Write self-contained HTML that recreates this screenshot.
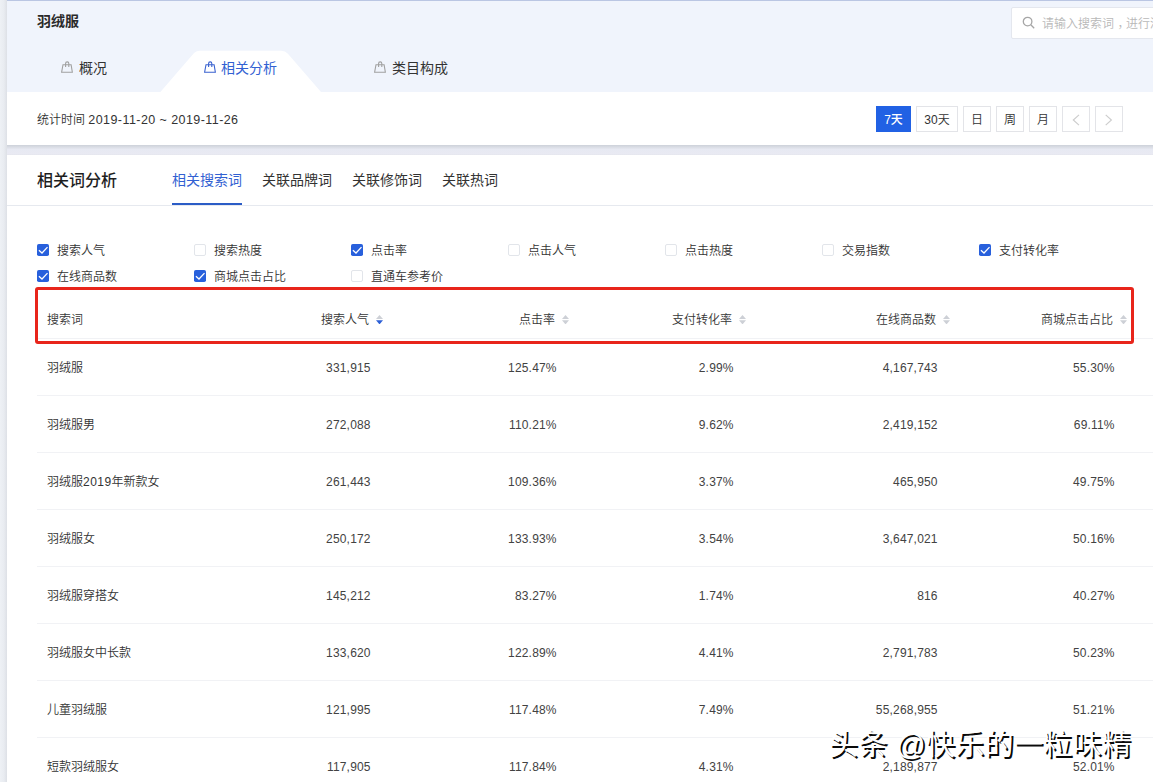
<!DOCTYPE html>
<html lang="zh-CN">
<head>
<meta charset="utf-8">
<title>羽绒服 - 相关分析</title>
<style>
*{box-sizing:border-box;margin:0;padding:0}
html,body{width:1153px;height:782px;overflow:hidden}
body{background:#e9ecf2;font-family:"Liberation Sans","Noto Sans CJK SC",sans-serif;font-size:12px;color:#333;position:relative;font-weight:350}
.a{position:absolute;white-space:nowrap}
#p1{left:7px;top:0;width:1146px;height:145px;background:#fff}
#strip{left:0;top:0;width:7px;height:782px;background:linear-gradient(to right,#eef1f5 0,#e9ecf1 55%,#dde0e6 100%)}
#gap{left:7px;top:145px;width:1146px;height:10px;background:linear-gradient(to bottom,#cdd1d9 0,#dcdfe7 25%,#e7e9f2 45%,#e9eaf3 85%,#e5e6ee 100%)}
#p1top{left:7px;top:0;width:1146px;height:92px;background:#f0f4fc;border-top:1px solid #bac6e3}
#title{left:37px;top:12px;font-size:14px;font-weight:700;color:#2a2a2a;line-height:18px}
.tab{top:58px;font-size:14px;line-height:20px;color:#333;font-weight:400}
.tab.on{color:#3261d2}
.ico{top:61px}
#search{left:1011px;top:7px;width:160px;height:32px;background:#fff;border:1px solid #e4e7ee;border-radius:2px}
#ph{left:1042px;top:16px;color:#b8b8b8;font-size:12px;line-height:16px}
#stat{left:37px;top:111px;font-size:12px;line-height:18px;color:#333}
.btn{top:106px;height:26px;border:1px solid #e3e4e8;background:#fff;font-size:12px;line-height:26px;text-align:center;color:#333}
.btn.on{background:#2161e4;border-color:#2161e4;color:#fff;font-weight:500}
#p2{left:7px;top:155px;width:1146px;height:640px;background:#fff}
#h2{left:37px;top:170px;font-size:16px;font-weight:500;color:#1e1e1e;line-height:22px}
.st{top:170px;font-size:14px;line-height:20px;color:#333;font-weight:400}
.st.on{color:#3261d2}
#hline{left:7px;top:205px;width:1146px;height:1px;background:#e6e9ef}
#uline{left:172px;top:203px;width:70px;height:2px;background:#2b5cc6}
.cb{font-size:12px;line-height:16px;color:#333}
.bx{width:12px;height:12px;border:1px solid #e2e5ea;border-radius:2px;background:#fff}
.bx.on{background:#2062e6;border-color:#2062e6}
#red{left:35px;top:287px;width:1099px;height:57px;border:3px solid #e8251b;border-radius:3px}
.th{top:312px;font-size:12px;line-height:16px;color:#363636}
.sep{left:37px;width:1116px;height:1px;background:#f1f2f5}
.td{font-size:12px;line-height:16px;color:#333}
.n{color:#424242;letter-spacing:.18px}
#wm{left:829px;top:724px;font-size:29px;line-height:42px;color:#fff;text-shadow:1.8px 1.8px 0 #0a0a0a;font-weight:400;letter-spacing:.35px}
</style>
</head>
<body>
<div id="strip" class="a"></div><div id="gap" class="a"></div><div id="p1" class="a"></div><div id="p1top" class="a"></div>
<header>
<h1 id="title" class="a">羽绒服</h1>
<nav aria-label="页面导航">
<svg class="a" style="left:150px;top:48px" width="190" height="44" viewBox="0 0 190 44"><path d="M10.4 44 L43.4 5.8 Q46 2.75 50 2.75 L131.3 2.75 Q135.3 2.75 137.9 5.8 L171 44z" fill="#fff"/></svg>
<svg class="a ico" style="left:61px;top:61px" width="12" height="12" viewBox="0 0 12 12" fill="none" stroke="#a0a0a0" stroke-width="1.1"><path d="M2 3.7H10.1L11.35 11.2H0.6Z"/><path d="M4.6 6V2.45a1.6 1.6 0 0 1 3.2 0V6"/></svg><div class="a tab" style="left:79px">概况</div>
<svg class="a ico" style="left:203.5px;top:61px" width="12" height="12" viewBox="0 0 12 12" fill="none" stroke="#3a62cf" stroke-width="1.1"><path d="M2 3.7H10.1L11.35 11.2H0.6Z"/><path d="M4.6 6V2.45a1.6 1.6 0 0 1 3.2 0V6"/></svg><div class="a tab on" style="left:221px">相关分析</div>
<svg class="a ico" style="left:374px;top:61px" width="12" height="12" viewBox="0 0 12 12" fill="none" stroke="#a0a0a0" stroke-width="1.1"><path d="M2 3.7H10.1L11.35 11.2H0.6Z"/><path d="M4.6 6V2.45a1.6 1.6 0 0 1 3.2 0V6"/></svg><div class="a tab" style="left:392px">类目构成</div>
</nav>
<div id="search" class="a"></div>
<svg class="a" style="left:1022px;top:16px" width="14" height="14" viewBox="0 0 14 14" fill="none" stroke="#a6a6a6" stroke-width="1.3"><circle cx="5.6" cy="5.6" r="4.3"/><path d="M8.8 8.8l3.4 3.4"/></svg>
<div id="ph" class="a">请输入搜索词<span style="position:relative;left:3.5px">，</span>进行深度分析</div>
<div id="stat" class="a">统计时间 <span style="font-size:12.5px;letter-spacing:.43px">2019-11-20 ~ 2019-11-26</span></div>
<div class="a btn on" style="left:876px;width:35px">7天</div>
<div class="a btn" style="left:916px;width:42px">30天</div>
<div class="a btn" style="left:963px;width:28px">日</div>
<div class="a btn" style="left:996px;width:28px">周</div>
<div class="a btn" style="left:1029px;width:28px">月</div>
<div class="a btn" style="left:1062px;width:28px"><svg class="a" style="left:7px;top:5px" width="12" height="16" viewBox="0 0 12 16" fill="none" stroke="#cdcdcd" stroke-width="1.15"><path d="M9 2.8L3.3 8L9 13.2"/></svg></div>
<div class="a btn" style="left:1095px;width:28px"><svg class="a" style="left:7px;top:5px" width="12" height="16" viewBox="0 0 12 16" fill="none" stroke="#cdcdcd" stroke-width="1.15"><path d="M2.7 2.8L8.4 8L2.7 13.2"/></svg></div>
</header>
<main>
<div id="p2" class="a"></div>
<h2 id="h2" class="a">相关词分析</h2>
<nav aria-label="词类型">
<div class="a st on" style="left:172px">相关搜索词</div>
<div class="a st" style="left:262px">关联品牌词</div>
<div class="a st" style="left:352px">关联修饰词</div>
<div class="a st" style="left:442px">关联热词</div>
</nav>
<div id="hline" class="a"></div><div id="uline" class="a"></div>
<section aria-label="指标选择">
<svg class="a" style="left:37px;top:244px" width="12" height="12" viewBox="0 0 12 12"><rect width="12" height="12" rx="1.8" fill="#2860dc"/><path d="M1.9 6.2L5 9L10.5 3.1" fill="none" stroke="#fff" stroke-width="1.25"/></svg><div class="a cb" style="left:57px;top:243px">搜索人气</div>
<div class="a bx" style="left:194px;top:244px"></div><div class="a cb" style="left:214px;top:243px">搜索热度</div>
<svg class="a" style="left:351px;top:244px" width="12" height="12" viewBox="0 0 12 12"><rect width="12" height="12" rx="1.8" fill="#2860dc"/><path d="M1.9 6.2L5 9L10.5 3.1" fill="none" stroke="#fff" stroke-width="1.25"/></svg><div class="a cb" style="left:371px;top:243px">点击率</div>
<div class="a bx" style="left:508px;top:244px"></div><div class="a cb" style="left:528px;top:243px">点击人气</div>
<div class="a bx" style="left:665px;top:244px"></div><div class="a cb" style="left:685px;top:243px">点击热度</div>
<div class="a bx" style="left:822px;top:244px"></div><div class="a cb" style="left:842px;top:243px">交易指数</div>
<svg class="a" style="left:979px;top:244px" width="12" height="12" viewBox="0 0 12 12"><rect width="12" height="12" rx="1.8" fill="#2860dc"/><path d="M1.9 6.2L5 9L10.5 3.1" fill="none" stroke="#fff" stroke-width="1.25"/></svg><div class="a cb" style="left:999px;top:243px">支付转化率</div>
<svg class="a" style="left:37px;top:270px" width="12" height="12" viewBox="0 0 12 12"><rect width="12" height="12" rx="1.8" fill="#2860dc"/><path d="M1.9 6.2L5 9L10.5 3.1" fill="none" stroke="#fff" stroke-width="1.25"/></svg><div class="a cb" style="left:57px;top:269px">在线商品数</div>
<svg class="a" style="left:194px;top:270px" width="12" height="12" viewBox="0 0 12 12"><rect width="12" height="12" rx="1.8" fill="#2860dc"/><path d="M1.9 6.2L5 9L10.5 3.1" fill="none" stroke="#fff" stroke-width="1.25"/></svg><div class="a cb" style="left:214px;top:269px">商城点击占比</div>
<div class="a bx" style="left:351px;top:270px"></div><div class="a cb" style="left:371px;top:269px">直通车参考价</div>
</section>
<section role="table" aria-label="相关搜索词">
<div class="a th" style="left:47px">搜索词</div>
<div class="a th" style="right:784px">搜索人气</div>
<svg class="a" style="left:375.8px;top:314.8px" width="7" height="9.4" viewBox="0 0 7 9.4"><path d="M3.5 0L7 3.9H0z" fill="#cdd0d6"/><path d="M0 5.3h7L3.5 9.4z" fill="#2c5fd6"/></svg>
<div class="a th" style="right:598px">点击率</div>
<svg class="a" style="left:561.8px;top:314.8px" width="7" height="9.4" viewBox="0 0 7 9.4"><path d="M3.5 0L7 3.9H0z" fill="#cdd0d6"/><path d="M0 5.3h7L3.5 9.4z" fill="#cdd0d6"/></svg>
<div class="a th" style="right:421px">支付转化率</div>
<svg class="a" style="left:738.8px;top:314.8px" width="7" height="9.4" viewBox="0 0 7 9.4"><path d="M3.5 0L7 3.9H0z" fill="#cdd0d6"/><path d="M0 5.3h7L3.5 9.4z" fill="#cdd0d6"/></svg>
<div class="a th" style="right:217px">在线商品数</div>
<svg class="a" style="left:942.8px;top:314.8px" width="7" height="9.4" viewBox="0 0 7 9.4"><path d="M3.5 0L7 3.9H0z" fill="#cdd0d6"/><path d="M0 5.3h7L3.5 9.4z" fill="#cdd0d6"/></svg>
<div class="a th" style="right:40px">商城点击占比</div>
<svg class="a" style="left:1119.8px;top:314.8px" width="7" height="9.4" viewBox="0 0 7 9.4"><path d="M3.5 0L7 3.9H0z" fill="#cdd0d6"/><path d="M0 5.3h7L3.5 9.4z" fill="#cdd0d6"/></svg>
<div class="a sep" style="top:338px"></div>
<div class="a sep" style="top:395px"></div>
<div class="a td" style="left:47px;top:360px">羽绒服</div>
<div class="a td n" style="right:782.3px;top:360px">331,915</div>
<div class="a td n" style="right:596.3px;top:360px">125.47%</div>
<div class="a td n" style="right:419.3px;top:360px">2.99%</div>
<div class="a td n" style="right:215.3px;top:360px">4,167,743</div>
<div class="a td n" style="right:38.3px;top:360px">55.30%</div>
<div class="a sep" style="top:452px"></div>
<div class="a td" style="left:47px;top:417px">羽绒服男</div>
<div class="a td n" style="right:782.3px;top:417px">272,088</div>
<div class="a td n" style="right:596.3px;top:417px">110.21%</div>
<div class="a td n" style="right:419.3px;top:417px">9.62%</div>
<div class="a td n" style="right:215.3px;top:417px">2,419,152</div>
<div class="a td n" style="right:38.3px;top:417px">69.11%</div>
<div class="a sep" style="top:509px"></div>
<div class="a td" style="left:47px;top:474px">羽绒服<span style="letter-spacing:.45px">2019</span>年新款女</div>
<div class="a td n" style="right:782.3px;top:474px">261,443</div>
<div class="a td n" style="right:596.3px;top:474px">109.36%</div>
<div class="a td n" style="right:419.3px;top:474px">3.37%</div>
<div class="a td n" style="right:215.3px;top:474px">465,950</div>
<div class="a td n" style="right:38.3px;top:474px">49.75%</div>
<div class="a sep" style="top:566px"></div>
<div class="a td" style="left:47px;top:531px">羽绒服女</div>
<div class="a td n" style="right:782.3px;top:531px">250,172</div>
<div class="a td n" style="right:596.3px;top:531px">133.93%</div>
<div class="a td n" style="right:419.3px;top:531px">3.54%</div>
<div class="a td n" style="right:215.3px;top:531px">3,647,021</div>
<div class="a td n" style="right:38.3px;top:531px">50.16%</div>
<div class="a sep" style="top:623px"></div>
<div class="a td" style="left:47px;top:588px">羽绒服穿搭女</div>
<div class="a td n" style="right:782.3px;top:588px">145,212</div>
<div class="a td n" style="right:596.3px;top:588px">83.27%</div>
<div class="a td n" style="right:419.3px;top:588px">1.74%</div>
<div class="a td n" style="right:215.3px;top:588px">816</div>
<div class="a td n" style="right:38.3px;top:588px">40.27%</div>
<div class="a sep" style="top:680px"></div>
<div class="a td" style="left:47px;top:645px">羽绒服女中长款</div>
<div class="a td n" style="right:782.3px;top:645px">133,620</div>
<div class="a td n" style="right:596.3px;top:645px">122.89%</div>
<div class="a td n" style="right:419.3px;top:645px">4.41%</div>
<div class="a td n" style="right:215.3px;top:645px">2,791,783</div>
<div class="a td n" style="right:38.3px;top:645px">50.23%</div>
<div class="a sep" style="top:737px"></div>
<div class="a td" style="left:47px;top:702px">儿童羽绒服</div>
<div class="a td n" style="right:782.3px;top:702px">121,995</div>
<div class="a td n" style="right:596.3px;top:702px">117.48%</div>
<div class="a td n" style="right:419.3px;top:702px">7.49%</div>
<div class="a td n" style="right:215.3px;top:702px">55,268,955</div>
<div class="a td n" style="right:38.3px;top:702px">51.21%</div>
<div class="a sep" style="top:794px"></div>
<div class="a td" style="left:47px;top:759px">短款羽绒服女</div>
<div class="a td n" style="right:782.3px;top:759px">117,905</div>
<div class="a td n" style="right:596.3px;top:759px">117.84%</div>
<div class="a td n" style="right:419.3px;top:759px">4.31%</div>
<div class="a td n" style="right:215.3px;top:759px">2,189,877</div>
<div class="a td n" style="right:38.3px;top:759px">52.01%</div>
<div id="red" class="a"></div>
</section>
</main>
<div id="wm" class="a">头条 @快乐的一粒味精</div>
</body>
</html>
